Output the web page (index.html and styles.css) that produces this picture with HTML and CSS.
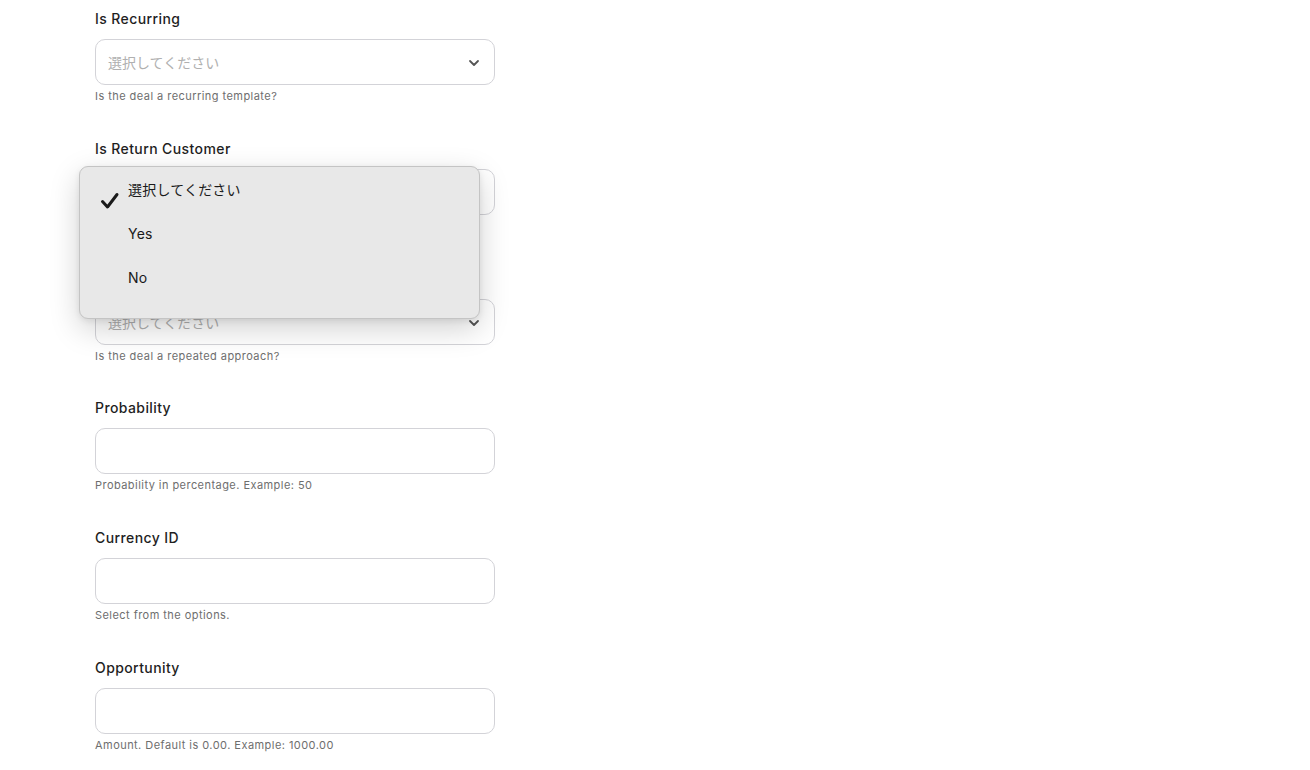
FILE: index.html
```html
<!DOCTYPE html>
<html lang="ja">
<head>
    <meta charset="UTF-8">
    <meta name="viewport" content="width=device-width, initial-scale=1.0">
    <title>Deal Form</title>
    <link rel="stylesheet" href="styles.css">
</head>
<body>
    <form class="deal-form">
        <div class="field">
            <label class="field-label">Is Recurring</label>
            <div class="select-box">
                <span class="placeholder">選択してください</span>
                <svg class="chevron" width="12" height="8" viewBox="0 0 12 8"><polyline points="2,2 6,6 10,2" fill="none" stroke="#555" stroke-width="1.8" stroke-linecap="round" stroke-linejoin="round"/></svg>
            </div>
            <div class="help">Is the deal a recurring template?</div>
        </div>

        <div class="field">
            <label class="field-label">Is Return Customer</label>
            <div class="select-box">
                <span class="placeholder">選択してください</span>
                <svg class="chevron" width="12" height="8" viewBox="0 0 12 8"><polyline points="2,2 6,6 10,2" fill="none" stroke="#555" stroke-width="1.8" stroke-linecap="round" stroke-linejoin="round"/></svg>
            </div>
            <div class="help">Is the deal from a return customer?</div>

            <ul class="menu">
                <li class="menu-item selected">
                    <svg class="check" width="20" height="18" viewBox="0 0 20 18"><polyline points="2.5,9.5 7.5,15 17,2.5" fill="none" stroke="#1a1a1a" stroke-width="3" stroke-linecap="round" stroke-linejoin="round"/></svg>
                    <span>選択してください</span>
                </li>
                <li class="menu-item"><span>Yes</span></li>
                <li class="menu-item"><span>No</span></li>
            </ul>
        </div>

        <div class="field">
            <label class="field-label">Is Repeated Approach</label>
            <div class="select-box">
                <span class="placeholder">選択してください</span>
                <svg class="chevron" width="12" height="8" viewBox="0 0 12 8"><polyline points="2,2 6,6 10,2" fill="none" stroke="#555" stroke-width="1.8" stroke-linecap="round" stroke-linejoin="round"/></svg>
            </div>
            <div class="help">Is the deal a repeated approach?</div>
        </div>

        <div class="field">
            <label class="field-label">Probability</label>
            <input class="text-box" type="text">
            <div class="help">Probability in percentage. Example: 50</div>
        </div>

        <div class="field">
            <label class="field-label">Currency ID</label>
            <input class="text-box" type="text">
            <div class="help">Select from the options.</div>
        </div>

        <div class="field">
            <label class="field-label">Opportunity</label>
            <input class="text-box" type="text">
            <div class="help">Amount. Default is 0.00. Example: 1000.00</div>
        </div>
    </form>
</body>
</html>
```

FILE: styles.css
```css
body {
    font-family: Inter, "Noto Sans CJK JP", sans-serif;
    background-color: #fff;
    color: #1f1f1f;
    margin: 0;
    padding: 9px 0 0 95px;
}

.deal-form {
    width: 400px;
}

.field {
    position: relative;
    margin-bottom: 34.8px;
}

.field-label {
    display: block;
    font-size: 14px;
    font-weight: 500;
    line-height: 20px;
    letter-spacing: 0.4px;
    margin-bottom: 10px;
}

.select-box,
.text-box {
    display: flex;
    align-items: center;
    justify-content: space-between;
    width: 100%;
    height: 46px;
    box-sizing: border-box;
    border: 1px solid #d3d3d8;
    border-radius: 10px;
    padding: 0 14px 0 12px;
    background-color: #fff;
    font-family: inherit;
    font-size: 14px;
    margin: 0;
}

.placeholder {
    color: #b0b0b0;
    font-size: 14px;
}

.chevron {
    margin-top: 2px;
}

.help {
    font-size: 11px;
    line-height: 16px;
    color: #6e6e6e;
    letter-spacing: 0.45px;
    margin-top: 3px;
}

.menu {
    position: absolute;
    top: 27px;
    left: -16px;
    width: 401px;
    height: 153px;
    box-sizing: border-box;
    margin: 0;
    padding: 1px 0 0;
    list-style: none;
    background-color: #e8e8e8;
    border: 1px solid #c4c4c4;
    border-radius: 9px;
    box-shadow: 0 10px 30px rgba(0, 0, 0, 0.18), 0 2px 6px rgba(0, 0, 0, 0.08);
    z-index: 10;
}

.menu-item {
    position: relative;
    height: 44px;
    padding-left: 48px;
    font-size: 14px;
    font-weight: 400;
    line-height: 44px;
    letter-spacing: 0.2px;
    color: #1a1a1a;
}

.menu-item .check {
    position: absolute;
    left: 20px;
    top: 24px;
}
```
